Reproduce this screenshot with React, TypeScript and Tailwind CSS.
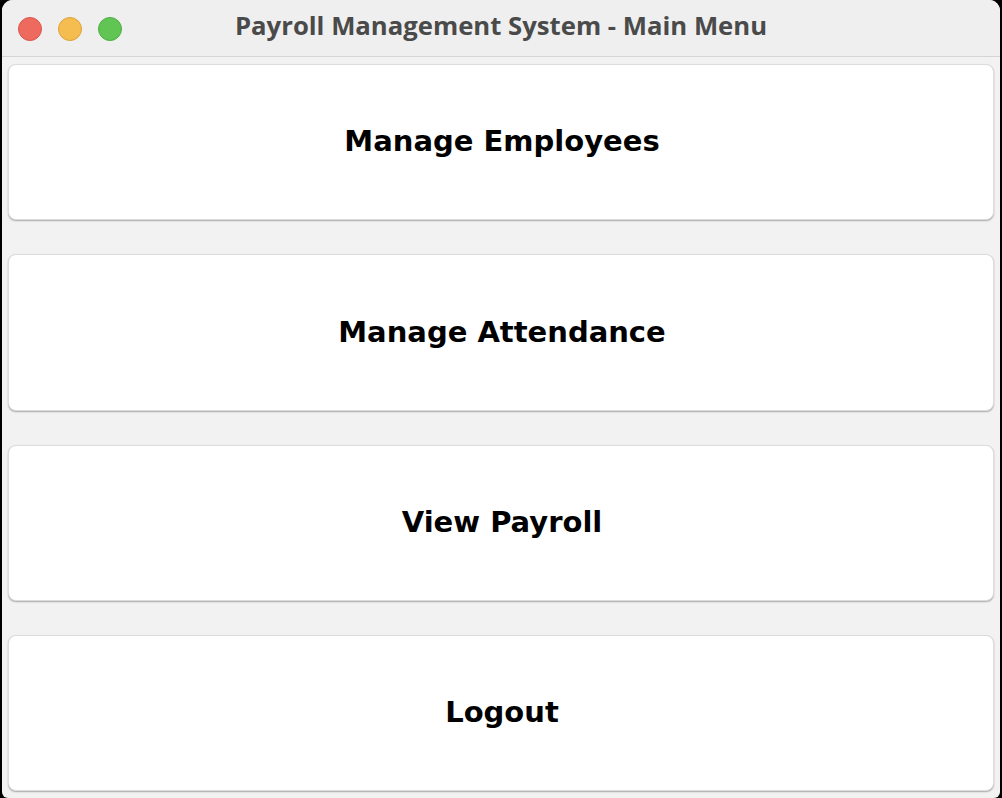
const items = ['Manage Employees', 'Manage Attendance', 'View Payroll', 'Logout'];

export default function App() {
    return (
        <div className="w-[1002px] h-[798px] bg-black pl-[2px] pr-[2px]">
            <div className="h-full bg-[#f2f2f2] rounded-t-[11px] rounded-b-[6px] overflow-hidden flex flex-col">
                {/* Title bar */}
                <div className="relative h-[57px] bg-[#efefef] border-b border-[#d5d5d5] flex items-center justify-center shrink-0">
                    <div className="absolute left-[16px] top-[17px] flex gap-[16px]">
                        <span className="w-[24px] h-[24px] rounded-full bg-[#ee6a5f] border border-[#d9574d]" />
                        <span className="w-[24px] h-[24px] rounded-full bg-[#f5bd4f] border border-[#dea23b]" />
                        <span className="w-[24px] h-[24px] rounded-full bg-[#61c554] border border-[#50ad44]" />
                    </div>
                    <h1 className="text-[25.7px] font-bold text-[#4a4a4a] font-['Open_Sans',sans-serif] -mt-[3px]">
                        Payroll Management System - Main Menu
                    </h1>
                </div>

                {/* Menu buttons */}
                <div className="flex-1 flex flex-col gap-[34px] px-[6px] pt-[7px] pb-[7px]">
                    {items.map((label) => (
                        <button
                            key={label}
                            className="flex-1 bg-white rounded-[8px] border border-[#dcdcdc] shadow-[0_1px_1.5px_rgba(0,0,0,0.3)] flex items-center justify-center pl-[2px] text-[29px] font-bold text-black font-['DejaVu_Sans',sans-serif]"
                        >
                            {label}
                        </button>
                    ))}
                </div>
            </div>
        </div>
    );
}
